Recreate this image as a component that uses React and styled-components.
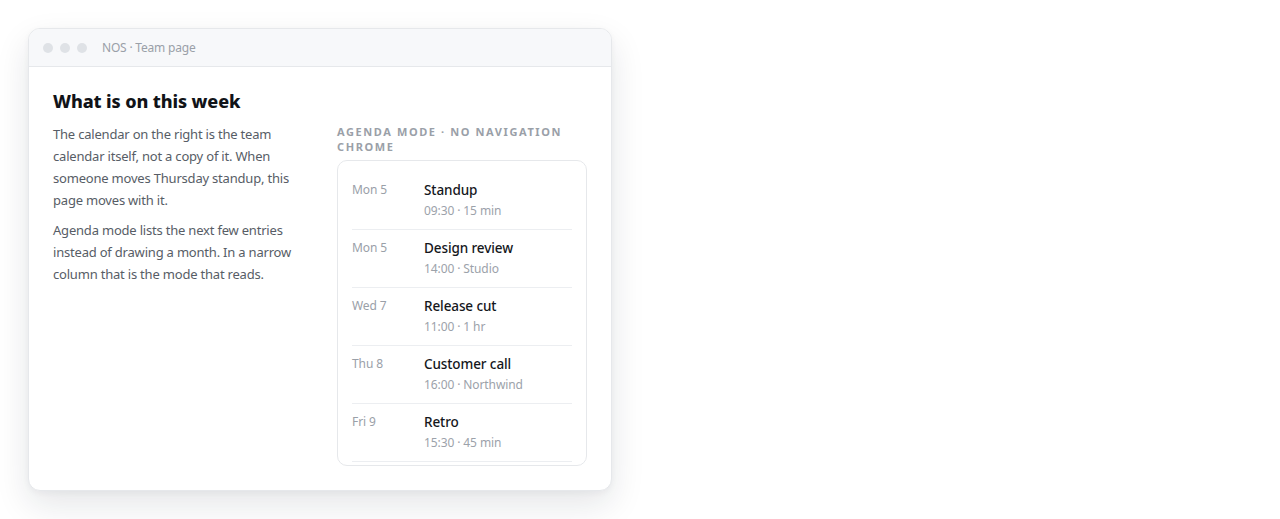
import React from 'react'
import styled, { createGlobalStyle } from 'styled-components'

const Global = createGlobalStyle`
  * { box-sizing: border-box; }
  body {
    margin: 0;
    background: #ffffff;
    font-family: "Noto Sans", "Liberation Sans", sans-serif;
  }
`

const Page = styled.div`
  padding: 28px;
`

const Window = styled.div`
  width: 584px;
  height: 463px;
  border: 1px solid #e6e8eb;
  border-radius: 12px;
  background: #fff;
  overflow: hidden;
  display: flex;
  flex-direction: column;
  box-shadow: 0 14px 34px rgba(15, 23, 42, 0.11), 0 2px 6px rgba(15, 23, 42, 0.04);
`

const TitleBar = styled.div`
  height: 38px;
  flex-shrink: 0;
  display: flex;
  align-items: center;
  padding: 0 14px;
  background: #f7f8fa;
  border-bottom: 1px solid #e6e8eb;
`

const Dots = styled.div`
  display: flex;
  gap: 7px;
  margin-right: 15px;
`

const Dot = styled.span`
  width: 10px;
  height: 10px;
  border-radius: 50%;
  background: #dfe2e6;
`

const WindowTitle = styled.span`
  font-size: 12px;
  letter-spacing: -0.2px;
  color: #9aa0a8;
`

const Body = styled.div`
  flex: 1;
  min-height: 0;
  padding: 22px 24px 24px 24px;
  display: flex;
  flex-direction: column;
`

const Heading = styled.h2`
  margin: 0 0 10px;
  font-size: 18px;
  line-height: 24px;
  font-weight: 800;
  letter-spacing: -0.1px;
  color: #111318;
`

const Columns = styled.div`
  flex: 1;
  min-height: 0;
  display: grid;
  grid-template-columns: 1fr 250px;
  gap: 24px;
`

const Prose = styled.div``

const Para = styled.p`
  margin: 0 0 8px;
  font-size: 13px;
  line-height: 22px;
  letter-spacing: -0.2px;
  color: #575d66;
`

const Side = styled.div`
  display: flex;
  flex-direction: column;
  min-height: 0;
`

const Label = styled.div`
  font-size: 11px;
  line-height: 15px;
  font-weight: 700;
  letter-spacing: 0.145em;
  text-transform: uppercase;
  color: #9aa0a8;
  margin: 1px 0 6px;
`

const Agenda = styled.div`
  flex: 1;
  min-height: 0;
  overflow: hidden;
  border: 1px solid #e6e8eb;
  border-radius: 10px;
  padding: 11px 14px 0;
`

const Entry = styled.div`
  display: grid;
  grid-template-columns: 72px 1fr;
  padding: 8px 0 9px;
  border-bottom: 1px solid #eceef1;
`

const Day = styled.div`
  padding-top: 1px;
  font-size: 12px;
  line-height: 18px;
  letter-spacing: -0.1px;
  color: #9aa0a8;
`

const Title = styled.div`
  font-size: 13.5px;
  line-height: 20px;
  font-weight: 500;
  letter-spacing: -0.1px;
  color: #15171c;
`

const Meta = styled.div`
  margin-top: 2px;
  font-size: 12px;
  line-height: 18px;
  letter-spacing: -0.1px;
  color: #9ca2aa;
`

const entries = [
  { day: 'Mon 5', title: 'Standup', meta: '09:30 · 15 min' },
  { day: 'Mon 5', title: 'Design review', meta: '14:00 · Studio' },
  { day: 'Wed 7', title: 'Release cut', meta: '11:00 · 1 hr' },
  { day: 'Thu 8', title: 'Customer call', meta: '16:00 · Northwind' },
  { day: 'Fri 9', title: 'Retro', meta: '15:30 · 45 min' },
]

const App = () => {
  return (
    <>
      <Global />
      <Page>
        <Window>
          <TitleBar>
            <Dots>
              <Dot />
              <Dot />
              <Dot />
            </Dots>
            <WindowTitle>NOS · Team page</WindowTitle>
          </TitleBar>
          <Body>
            <Heading>What is on this week</Heading>
            <Columns>
              <Prose>
                <Para>
                  The calendar on the right is the team calendar itself, not a copy of it. When
                  someone moves Thursday standup, this page moves with it.
                </Para>
                <Para>
                  Agenda mode lists the next few entries instead of drawing a month. In a narrow
                  column that is the mode that reads.
                </Para>
              </Prose>
              <Side>
                <Label>Agenda mode · no navigation chrome</Label>
                <Agenda>
                  {entries.map((e, i) => (
                    <Entry key={i}>
                      <Day>{e.day}</Day>
                      <div>
                        <Title>{e.title}</Title>
                        <Meta>{e.meta}</Meta>
                      </div>
                    </Entry>
                  ))}
                </Agenda>
              </Side>
            </Columns>
          </Body>
        </Window>
      </Page>
    </>
  )
}

export default App
